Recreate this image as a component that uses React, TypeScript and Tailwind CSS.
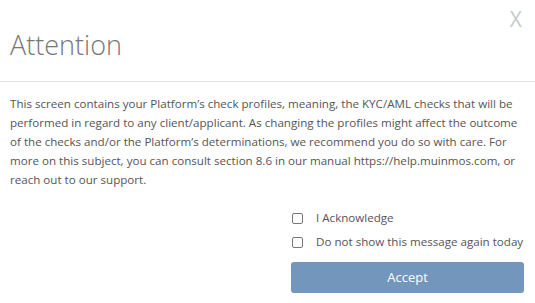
export default function App() {
  return (
    <div className="w-[535px] h-[303px] bg-white relative font-['Open_Sans',sans-serif] text-[#555]">
      <button className="absolute right-[13px] top-[9px] text-[21px] leading-none text-[#c8c8c8] font-['Open_Sans',sans-serif]">
        X
      </button>
      <div className="h-[82px] border-b border-[#e5e5e5] pl-[10px] pt-[27px]">
        <h1 className="text-[27px] font-light leading-[36px] text-[#777]">Attention</h1>
      </div>
      <div className="pl-[10px] pr-[8px] pt-[12px]">
        <p className="text-[11.6px] leading-[19px]">
          This screen contains your Platform’s check profiles, meaning, the KYC/AML checks that will be performed in
          regard to any client/applicant. As changing the profiles might affect the outcome of the checks and/or the
          Platform’s determinations, we recommend you do so with care. For more on this subject, you can consult
          section 8.6 in our manual https://help.muinmos.com, or reach out to our support.
        </p>
      </div>
      <div className="absolute left-[291px] top-[206px] w-[233px] flex flex-col">
        <label className="flex items-center h-[24px] gap-[13px] text-[11.6px]">
          <span className="w-[11px] h-[11px] border border-[#777] rounded-[2px] ml-[1px]" />
          I Acknowledge
        </label>
        <label className="flex items-center h-[24px] gap-[13px] text-[11.6px]">
          <span className="w-[11px] h-[11px] border border-[#777] rounded-[2px] ml-[1px]" />
          Do not show this message again today
        </label>
        <button className="mt-[8px] h-[31px] rounded-[3px] bg-[#7396bd] text-white text-[13px]">Accept</button>
      </div>
    </div>
  );
}
